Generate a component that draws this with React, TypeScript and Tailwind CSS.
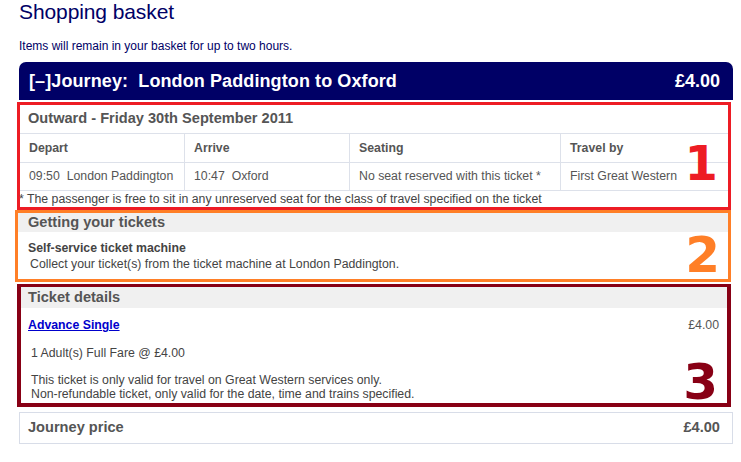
import React from "react";

const rows = [
  { time: "09:50", place: "London Paddington" },
  { time: "10:47", place: "Oxford" },
];

export default function App() {
  return (
    <div className="min-h-screen bg-white font-['Liberation_Sans',Arial,sans-serif] text-[#444]">
      <div className="pl-[19px] w-[733px]">
        <h1 className="text-[21px] leading-[24px] text-[#000066] tracking-[-0.1px]">Shopping basket</h1>
        <p className="mt-[15px] text-[12px] leading-[14px] text-[#000066]">
          Items will remain in your basket for up to two hours.
        </p>

        {/* journey header */}
        <div className="mt-[9px] h-[38px] rounded-t-[7px] bg-[#000066] flex items-center justify-between px-[10px] text-white font-bold text-[18px]">
          <span className="tracking-[0.1px]">
            [–]Journey:&nbsp; London Paddington to Oxford
          </span>
          <span className="pr-[3px]">£4.00</span>
        </div>

        {/* outward */}
        <section className="relative mt-[2px] -ml-[2px] w-[714px] border-[3px] border-[#ed1c24]">
          <div className="h-[28px] flex items-center pl-[8px] font-bold text-[14.6px] text-[#555]">
            Outward - Friday 30th September 2011
          </div>
          <div className="grid grid-cols-[165px_165px_211px_1fr] text-[12.3px] text-[#555] border-t border-[#dde1ea]">
            <div className="h-[28px] flex items-center pl-[9px] font-bold border-r border-[#dde1ea]">Depart</div>
            <div className="h-[28px] flex items-center pl-[9px] font-bold border-r border-[#dde1ea]">Arrive</div>
            <div className="h-[28px] flex items-center pl-[9px] font-bold border-r border-[#dde1ea]">Seating</div>
            <div className="h-[28px] flex items-center pl-[9px] font-bold">Travel by</div>
            {rows.map((r) => (
              <div
                key={r.time}
                className="h-[29px] flex items-center pl-[9px] border-t border-b border-r border-[#dde1ea] whitespace-pre"
              >
                {r.time}  {r.place}
              </div>
            ))}
            <div className="h-[29px] flex items-center pl-[9px] border-t border-b border-r border-[#dde1ea]">
              No seat reserved with this ticket *
            </div>
            <div className="h-[29px] flex items-center pl-[9px] border-t border-b border-[#dde1ea]">
              First Great Western
            </div>
          </div>
          <p className="text-[12.3px] leading-[16px] -ml-[1px] text-[#444]">
            * The passenger is free to sit in any unreserved seat for the class of travel specified on the ticket
          </p>
          <span className="absolute right-[10px] top-[34px] font-['DejaVu_Sans',sans-serif] font-bold text-[48px] leading-none text-[#ed1c24]">
            1
          </span>
        </section>

        {/* getting your tickets */}
        <section className="relative -ml-[4px] w-[716px] border-[3px] border-[#ff7f27]">
          <div className="h-[19px] bg-[#f0f0f0] flex items-center pl-[10px] font-bold text-[14.6px] text-[#555]">
            Getting your tickets
          </div>
          <div className="pt-[8px] pb-[7px] pl-[10px] text-[12.3px] leading-[16px]">
            <p className="font-bold text-[#444]">Self-service ticket machine</p>
            <p className="pl-[2px]">Collect your ticket(s) from the ticket machine at London Paddington.</p>
          </div>
          <span className="absolute right-[8px] top-[17px] font-['DejaVu_Sans',sans-serif] font-bold text-[50px] leading-none text-[#ff7f27]">
            2
          </span>
        </section>

        {/* ticket details */}
        <section className="relative mt-[2px] -ml-[2px] w-[714px] border-[4px] border-t-[3px] border-[#880015]">
          <div className="h-[21px] bg-[#f0f0f0] flex items-center pl-[7px] font-bold text-[14.6px] text-[#555]">
            Ticket details
          </div>
          <div className="flex justify-between items-center pl-[7px] pr-[8px] pt-[10px] text-[12.3px] leading-[14px]">
            <a href="#" className="font-bold text-[#0000cc] underline">Advance Single</a>
            <span className="text-[#555]">£4.00</span>
          </div>
          <p className="pl-[10px] mt-[14px] text-[12.3px] leading-[14px]">1 Adult(s) Full Fare @ £4.00</p>
          <div className="pl-[10px] mt-[13px] pb-[2px] text-[12.3px] leading-[14px]">
            <p>This ticket is only valid for travel on Great Western services only.</p>
            <p>Non-refundable ticket, only valid for the date, time and trains specified.</p>
          </div>
          <span className="absolute right-[9px] top-[70px] font-['DejaVu_Sans',sans-serif] font-bold text-[50px] leading-none text-[#880015]">
            3
          </span>
        </section>

        {/* total */}
        <div className="mt-[5px] h-[32px] border border-[#d8dde8] flex items-center justify-between pl-[8px] pr-[12px] font-bold text-[14.6px] text-[#555]">
          <span>Journey price</span>
          <span>£4.00</span>
        </div>
      </div>
    </div>
  );
}
